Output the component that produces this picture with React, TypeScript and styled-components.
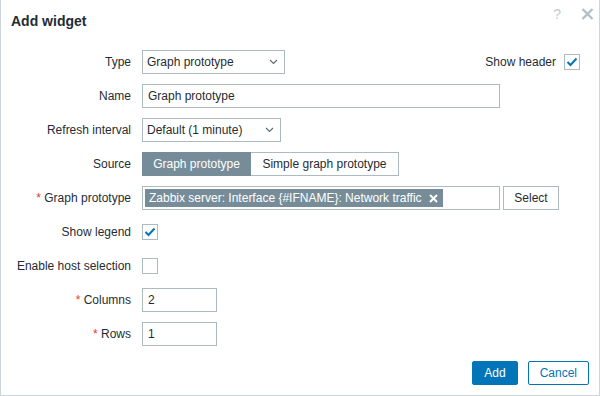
import React, { useState } from 'react'
import styled, { createGlobalStyle } from 'styled-components'

const GlobalStyle = createGlobalStyle`
  html, body {
    margin: 0;
    padding: 0;
    background: #ffffff;
    overflow: hidden;
  }
  * {
    box-sizing: border-box;
  }
`

const Dialog = styled.div`
  width: 600px;
  height: 396px;
  display: flex;
  flex-direction: column;
  background: #ffffff;
  border: 1px solid #ccd5d9;
  border-top: none;
  font-family: 'Liberation Sans', Arial, sans-serif;
  font-size: 12px;
  color: #1f2c33;
`

const Header = styled.div`
  height: 42px;
  display: flex;
  align-items: flex-start;
  justify-content: space-between;
  padding: 0 5px 0 10px;
`

const Title = styled.h4`
  margin: 13px 0 0;
  font-size: 14px;
  line-height: 16px;
  font-weight: 700;
  color: #1f2c33;
`

const HeaderIcons = styled.div`
  display: flex;
  align-items: center;
  gap: 19px;
  margin-top: 6px;
`

const HelpIcon = styled.span`
  font-size: 14px;
  line-height: 16px;
  color: #c0cbd1;
`

const CloseIcon = styled.button`
  border: none;
  background: none;
  padding: 0;
  width: 14px;
  height: 16px;
  display: flex;
  align-items: center;
  justify-content: center;
  cursor: pointer;
`

const Body = styled.div`
  display: flex;
  flex-direction: column;
  gap: 10px;
  padding-top: 8px;
`

const Row = styled.div`
  display: grid;
  grid-template-columns: 130px 1fr;
  column-gap: 11px;
  align-items: center;
  min-height: 24px;
`

const Label = styled.label<{ $required?: boolean }>`
  text-align: right;
  white-space: nowrap;
  line-height: 14px;

  &::before {
    content: ${(p) => (p.$required ? "'* '" : "''")};
    color: #e33734;
  }
`

const Field = styled.div`
  display: flex;
  align-items: center;
`

const TypeField = styled(Field)`
  width: 438px;
  justify-content: space-between;
`

const Inline = styled.div`
  display: flex;
  align-items: center;
  gap: 8px;
`

const SelectBox = styled.div<{ $w: number }>`
  width: ${(p) => p.$w}px;
  height: 24px;
  border: 1px solid #acbbc2;
  display: flex;
  align-items: center;
  justify-content: space-between;
  padding: 0 6px 0 4px;
  background: #ffffff;
`

const TextInput = styled.input<{ $w: number }>`
  width: ${(p) => p.$w}px;
  height: 24px;
  border: 1px solid #acbbc2;
  padding: 0 5px;
  font-family: inherit;
  font-size: 12px;
  color: #1f2c33;
  outline: none;
`

const Segmented = styled.div`
  display: flex;
`

const Segment = styled.button<{ $active?: boolean; $w: number }>`
  width: ${(p) => p.$w}px;
  height: 24px;
  padding: 0;
  font-family: inherit;
  font-size: 12px;
  border: 1px solid ${(p) => (p.$active ? '#768d99' : '#acbbc2')};
  background: ${(p) => (p.$active ? '#768d99' : '#ffffff')};
  color: ${(p) => (p.$active ? '#ffffff' : '#1f2c33')};
  cursor: pointer;

  & + & {
    border-left: none;
  }
`

const MultiSelect = styled.div`
  width: 358px;
  height: 24px;
  border: 1px solid #acbbc2;
  padding: 2px;
  display: flex;
  align-items: center;
`

const Tag = styled.span`
  height: 18px;
  display: inline-flex;
  align-items: center;
  gap: 7px;
  padding: 0 5px 0 4px;
  background: #768d99;
  color: #ffffff;
  white-space: nowrap;
`

const GroupButton = styled.button`
  width: 56px;
  height: 24px;
  margin-left: 3px;
  padding: 0;
  border: 1px solid #acbbc2;
  background: #ffffff;
  font-family: inherit;
  font-size: 12px;
  color: #1f2c33;
  cursor: pointer;
`

const Checkbox = styled.span`
  width: 16px;
  height: 16px;
  border: 1px solid #acbbc2;
  background: #ffffff;
  display: inline-flex;
  align-items: center;
  justify-content: center;
  cursor: pointer;
`

const Footer = styled.div`
  margin-top: auto;
  display: flex;
  justify-content: flex-end;
  gap: 10px;
  padding: 0 10px 10px;
`

const FooterButton = styled.button<{ $primary?: boolean }>`
  height: 24px;
  padding: 0 11px;
  border: 1px solid #0275b8;
  border-radius: 2px;
  font-family: inherit;
  font-size: 12px;
  background: ${(p) => (p.$primary ? '#0275b8' : '#ffffff')};
  color: ${(p) => (p.$primary ? '#ffffff' : '#0275b8')};
  cursor: pointer;
`

const Chevron = () => (
  <svg width="9" height="6" viewBox="0 0 9 6">
    <polyline points="1,1 4.5,4.5 8,1" fill="none" stroke="#5b6a72" strokeWidth="1.1" />
  </svg>
)

const Check = () => (
  <svg width="12" height="10" viewBox="0 0 12 10">
    <polyline points="1.5,5 4.5,8 10.5,1.5" fill="none" stroke="#0275b8" strokeWidth="2" />
  </svg>
)

const CheckField: React.FC<{ checked: boolean; onToggle: () => void }> = ({ checked, onToggle }) => (
  <Checkbox onClick={onToggle}>{checked && <Check />}</Checkbox>
)

const App: React.FC = () => {
  const [showHeader, setShowHeader] = useState(true)
  const [showLegend, setShowLegend] = useState(true)
  const [hostSelection, setHostSelection] = useState(false)
  const [source, setSource] = useState('graph')

  return (
    <>
      <GlobalStyle />
      <Dialog>
        <Header>
          <Title>Add widget</Title>
          <HeaderIcons>
            <HelpIcon>?</HelpIcon>
            <CloseIcon>
              <svg width="13" height="12" viewBox="0 0 13 12">
                <path d="M1.5 1 L11.5 11 M11.5 1 L1.5 11" stroke="#b3c0c7" strokeWidth="2.4" />
              </svg>
            </CloseIcon>
          </HeaderIcons>
        </Header>

        <Body>
          <Row>
            <Label>Type</Label>
            <TypeField>
              <SelectBox $w={143}>
                Graph prototype
                <Chevron />
              </SelectBox>
              <Inline>
                <span>Show header</span>
                <CheckField checked={showHeader} onToggle={() => setShowHeader(!showHeader)} />
              </Inline>
            </TypeField>
          </Row>

          <Row>
            <Label>Name</Label>
            <Field>
              <TextInput $w={358} defaultValue="Graph prototype" />
            </Field>
          </Row>

          <Row>
            <Label>Refresh interval</Label>
            <Field>
              <SelectBox $w={139}>
                Default (1 minute)
                <Chevron />
              </SelectBox>
            </Field>
          </Row>

          <Row>
            <Label>Source</Label>
            <Field>
              <Segmented>
                <Segment $w={109} $active={source === 'graph'} onClick={() => setSource('graph')}>
                  Graph prototype
                </Segment>
                <Segment $w={148} $active={source === 'simple'} onClick={() => setSource('simple')}>
                  Simple graph prototype
                </Segment>
              </Segmented>
            </Field>
          </Row>

          <Row>
            <Label $required>Graph prototype</Label>
            <Field>
              <MultiSelect>
                <Tag>
                  Zabbix server: Interface {'{#IFNAME}'}: Network traffic
                  <svg width="9" height="9" viewBox="0 0 9 9">
                    <path d="M1 1 L8 8 M8 1 L1 8" stroke="#ffffff" strokeWidth="2" />
                  </svg>
                </Tag>
              </MultiSelect>
              <GroupButton>Select</GroupButton>
            </Field>
          </Row>

          <Row>
            <Label>Show legend</Label>
            <Field>
              <CheckField checked={showLegend} onToggle={() => setShowLegend(!showLegend)} />
            </Field>
          </Row>

          <Row>
            <Label>Enable host selection</Label>
            <Field>
              <CheckField checked={hostSelection} onToggle={() => setHostSelection(!hostSelection)} />
            </Field>
          </Row>

          <Row>
            <Label $required>Columns</Label>
            <Field>
              <TextInput $w={75} defaultValue="2" />
            </Field>
          </Row>

          <Row>
            <Label $required>Rows</Label>
            <Field>
              <TextInput $w={75} defaultValue="1" />
            </Field>
          </Row>
        </Body>

        <Footer>
          <FooterButton $primary>Add</FooterButton>
          <FooterButton>Cancel</FooterButton>
        </Footer>
      </Dialog>
    </>
  )
}

export default App
